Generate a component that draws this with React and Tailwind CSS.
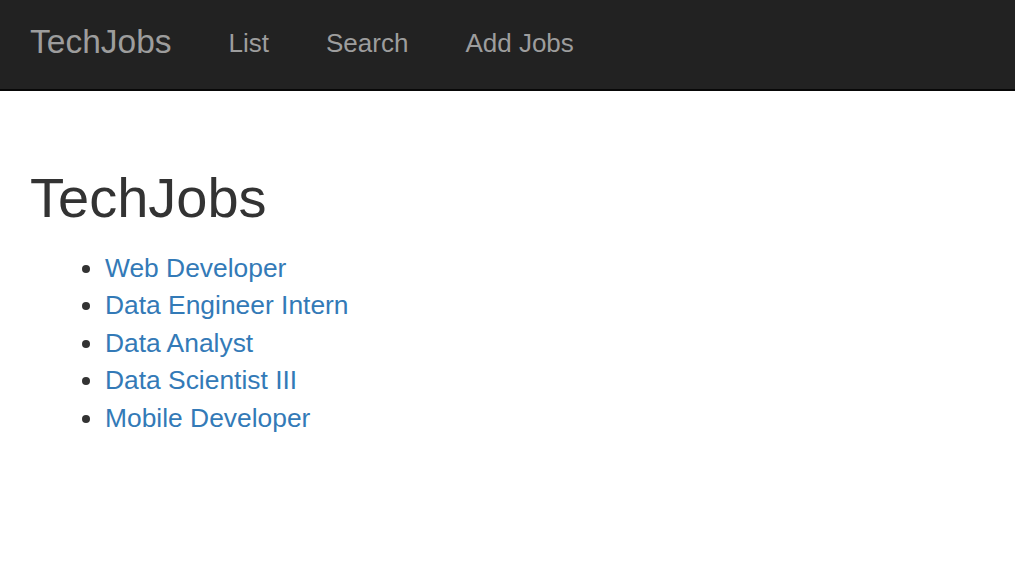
export default function App() {
  const jobs = ["Web Developer", "Data Engineer Intern", "Data Analyst", "Data Scientist III", "Mobile Developer"];
  return (
    <div className="min-h-[578px] bg-white" style={{ fontFamily: '"Liberation Sans", Arial, sans-serif' }}>
      <nav className="h-[91px] bg-[#222222] border-b-2 border-[#080808] flex items-center pl-[30px] pb-[3px]">
        <span className="text-[33.5px] text-[#9d9d9d] leading-none mb-[3px]">TechJobs</span>
        <div className="flex items-center gap-[57px] ml-[57px] text-[26px] text-[#9d9d9d] leading-none">
          <span>List</span>
          <span>Search</span>
          <span>Add Jobs</span>
        </div>
      </nav>
      <div className="pl-[30px]">
        <h1 className="text-[56px] text-[#333333] leading-none mt-[79px]">TechJobs</h1>
        <ul className="list-disc pl-[75px] mt-[24px] text-[26.4px] leading-[37.4px] text-[#333333]">
          {jobs.map((j) => (
            <li key={j}><a className="text-[#337ab7]">{j}</a></li>
          ))}
        </ul>
      </div>
    </div>
  );
}
